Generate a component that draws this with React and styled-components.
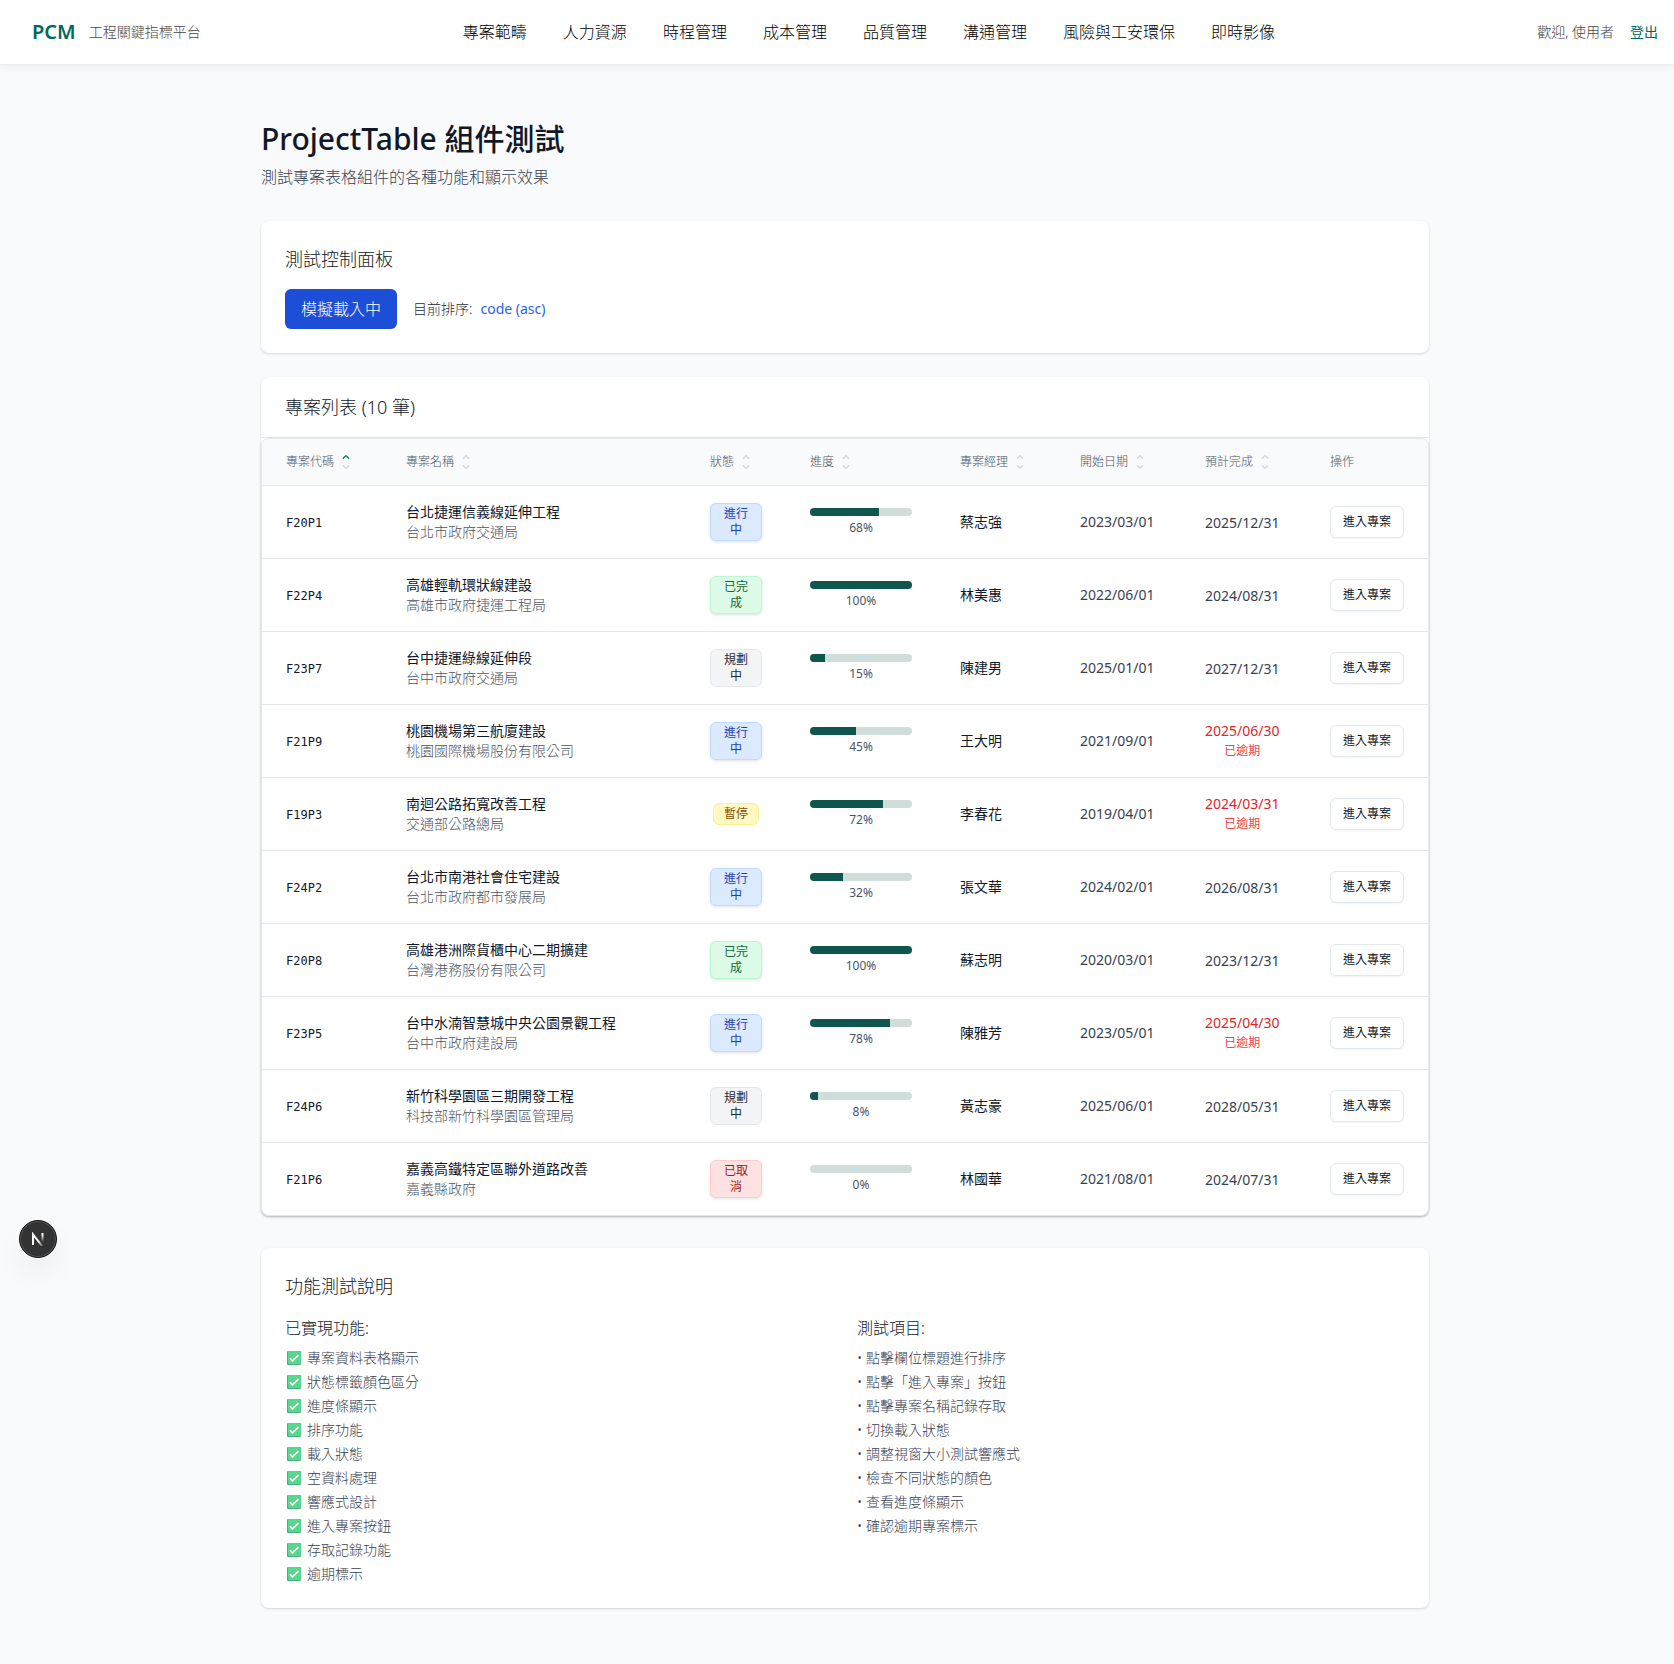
import React, { useState } from "react";
import styled, { createGlobalStyle } from "styled-components";

const GlobalStyle = createGlobalStyle`
  *, *::before, *::after { box-sizing: border-box; }
  body {
    margin: 0;
    background: #f9fafb;
    color: #111827;
    font-family: "Noto Sans", "Noto Sans CJK TC", sans-serif;
    font-size: 16px;
    font-weight: 300;
    line-height: 24px;
  }
  h1, h2, h3, p, ul { margin: 0; padding: 0; font-weight: 300; }
  ul { list-style: none; }
  button { font: inherit; cursor: pointer; }
  a { color: inherit; text-decoration: none; }
`;

const Header = styled.header`
  display: flex;
  justify-content: space-between;
  align-items: center;
  min-height: 65px;
  padding: 0 16px 0 32px;
  background: #fff;
  border-bottom: 1px solid #eceef0;
  box-shadow: 0 2px 8px rgba(0, 0, 0, 0.06);
`;

const Brand = styled.div`
  display: flex;
  align-items: center;
  gap: 13px;
`;

const Logo = styled.a`
  color: #00695c;
  font-size: 20px;
  font-weight: 600;
`;

const Muted = styled.span`
  color: #444;
  font-size: 14px;
`;

const Nav = styled.nav`
  display: flex;
  gap: 36px;
  color: #000;
`;

const Account = styled.div`
  display: flex;
  justify-content: flex-end;
  gap: 16px;
`;

const Logout = styled.a`
  color: #00695c;
  font-size: 14px;
  font-weight: 400;
`;

const Main = styled.main`
  max-width: 1184px;
  margin: 0 auto;
  padding: 56px 0 56px 16px;
`;

const PageHead = styled.div`
  margin-bottom: 32px;
`;

const PageTitle = styled.h1`
  margin-bottom: 8px;
  font-size: 30px;
  line-height: 36px;
  font-weight: 500;
`;

const PageIntro = styled.p`
  color: #374151;
`;

const Card = styled.section`
  padding: 24px;
  border-radius: 8px;
  background: #fff;
  box-shadow: 0 1px 3px rgba(0, 0, 0, 0.1), 0 1px 2px rgba(0, 0, 0, 0.06);
`;

const CardTitle = styled.h2`
  font-size: 18px;
  line-height: 28px;
`;

const Controls = styled.div`
  display: flex;
  align-items: center;
  gap: 16px;
  margin-top: 16px;
`;

const PrimaryButton = styled.button`
  padding: 8px 16px;
  border: 0;
  border-radius: 6px;
  background: #1d4ed8;
  color: #fff;
`;

const SortState = styled.p`
  display: flex;
  gap: 8px;
  color: #1f2937;
  font-size: 14px;
`;

const SortValue = styled.span`
  color: #2563eb;
  font-weight: 400;
`;

const ListCard = styled(Card)`
  margin: 24px 0 32px;
  padding: 0;
`;

const ListHead = styled.div`
  padding: 16px 24px;
  border-bottom: 1px solid #e5e7eb;
`;

const TableFrame = styled.div`
  overflow: hidden;
  border: 1px solid #e5e7eb;
  border-radius: 8px;
  background: #fff;
  box-shadow: 0 1px 3px rgba(0, 0, 0, 0.1), 0 1px 2px rgba(0, 0, 0, 0.06);
`;

const Table = styled.table`
  width: 100%;
  table-layout: fixed;
  border-collapse: separate;
  border-spacing: 0;
  font-size: 14px;
  line-height: 20px;
`;

const HeadCell = styled.th`
  height: 47px;
  padding: 0 24px;
  border-bottom: 1px solid #e5e7eb;
  background: #f9fafb;
  color: #4b5563;
  font-size: 12px;
  font-weight: 300;
  text-align: left;
`;

const SortButton = styled.button`
  display: flex;
  align-items: center;
  gap: 6px;
  padding: 0;
  border: 0;
  background: none;
  color: inherit;
  white-space: nowrap;
`;

const Cell = styled.td`
  padding: 16px 24px;
  border-bottom: 1px solid #e5e7eb;
  color: ${(p) => p.$tone || "#111827"};
  font-weight: 400;
  white-space: nowrap;

  tr:last-child > & { border-bottom: 0; }
`;

const Code = styled.span`
  font-family: "DejaVu Sans Mono", monospace;
  font-size: 12px;
`;

const ProjectName = styled.a`
  display: block;
  color: #0f172a;
`;

const Owner = styled.div`
  color: #4b5563;
  font-weight: 300;
`;

const BadgeSlot = styled.div`
  display: flex;
  justify-content: center;
`;

const badgeTones = {
  進行中: ["#dbeafe", "#bfdbfe", "#1e40af"],
  已完成: ["#dcfce7", "#bbf7d0", "#166534"],
  規劃中: ["#f3f4f6", "#e5e7eb", "#1f2937"],
  暫停: ["#fef9c3", "#fef08a", "#854d0e"],
  已取消: ["#fee2e2", "#fecaca", "#991b1b"],
};

const Badge = styled.span`
  padding: 2px 10px;
  border: 1px solid ${(p) => badgeTones[p.$status][1]};
  border-radius: 6px;
  background: ${(p) => badgeTones[p.$status][0]};
  color: ${(p) => badgeTones[p.$status][2]};
  box-shadow: ${(p) => (["暫停", "規劃中"].includes(p.$status) ? "none" : "0 1px 3px rgba(0, 0, 0, 0.12)")};
  font-size: 12px;
  line-height: 16px;
  text-align: center;
  white-space: normal;
`;

const Track = styled.div`
  overflow: hidden;
  height: 8px;
  border-radius: 4px;
  background: #cfdddb;
`;

const Fill = styled.div`
  height: 100%;
  background: #0f574e;
`;

const Percent = styled.div`
  margin-top: 4px;
  color: #4b5563;
  font-size: 12px;
  line-height: 16px;
  text-align: center;
`;

const DueDate = styled.div`
  display: inline-flex;
  flex-direction: column;
  align-items: center;
  vertical-align: middle;
  color: ${(p) => (p.$late ? "#dc2626" : "#374151")};
`;

const LateNote = styled.span`
  color: #ef4444;
  font-size: 12px;
`;

const EnterButton = styled.button`
  display: block;
  height: 32px;
  padding: 0 12px;
  border: 1px solid #e2e8f0;
  border-radius: 6px;
  background: #fff;
  color: #0f172a;
  box-shadow: 0 1px 2px rgba(0, 0, 0, 0.05);
  font-size: 12px;
  line-height: 16px;
`;

const Notes = styled.div`
  display: grid;
  grid-template-columns: 1fr 1fr;
  gap: 24px;
  margin-top: 16px;
`;

const NotesTitle = styled.h3`
  margin-bottom: 8px;
  font-size: 16px;
`;

const NotesList = styled.ul`
  display: grid;
  gap: 4px;
  color: #374151;
  font-size: 14px;
  line-height: 20px;
`;

const NotesItem = styled.li`
  display: flex;
  align-items: center;
  gap: 5px;
`;

const DevBadge = styled.button`
  position: fixed;
  left: 19px;
  bottom: 406px;
  display: grid;
  place-items: center;
  width: 38px;
  height: 38px;
  padding: 0;
  border: 1px solid #111;
  border-radius: 50%;
  background: #333;
  box-shadow: inset 0 0 0 1px #555, 0 16px 32px -8px rgba(0, 0, 0, 0.14);
`;

const navItems = ["專案範疇", "人力資源", "時程管理", "成本管理", "品質管理", "溝通管理", "風險與工安環保", "即時影像"];

const columns = [
  { label: "專案代碼", width: 120, sortable: true, active: true },
  { label: "專案名稱", sortable: true },
  { label: "狀態", width: 100, sortable: true },
  { label: "進度", width: 150, sortable: true },
  { label: "專案經理", width: 120, sortable: true },
  { label: "開始日期", width: 125, sortable: true },
  { label: "預計完成", width: 125, sortable: true },
  { label: "操作", width: 122 },
];

const projects = [
  ["F20P1", "台北捷運信義線延伸工程", "台北市政府交通局", "進行中", 68, "蔡志強", "2023/03/01", "2025/12/31"],
  ["F22P4", "高雄輕軌環狀線建設", "高雄市政府捷運工程局", "已完成", 100, "林美惠", "2022/06/01", "2024/08/31"],
  ["F23P7", "台中捷運綠線延伸段", "台中市政府交通局", "規劃中", 15, "陳建男", "2025/01/01", "2027/12/31"],
  ["F21P9", "桃園機場第三航廈建設", "桃園國際機場股份有限公司", "進行中", 45, "王大明", "2021/09/01", "2025/06/30", true],
  ["F19P3", "南迴公路拓寬改善工程", "交通部公路總局", "暫停", 72, "李春花", "2019/04/01", "2024/03/31", true],
  ["F24P2", "台北市南港社會住宅建設", "台北市政府都市發展局", "進行中", 32, "張文華", "2024/02/01", "2026/08/31"],
  ["F20P8", "高雄港洲際貨櫃中心二期擴建", "台灣港務股份有限公司", "已完成", 100, "蘇志明", "2020/03/01", "2023/12/31"],
  ["F23P5", "台中水湳智慧城中央公園景觀工程", "台中市政府建設局", "進行中", 78, "陳雅芳", "2023/05/01", "2025/04/30", true],
  ["F24P6", "新竹科學園區三期開發工程", "科技部新竹科學園區管理局", "規劃中", 8, "黃志豪", "2025/06/01", "2028/05/31"],
  ["F21P6", "嘉義高鐵特定區聯外道路改善", "嘉義縣政府", "已取消", 0, "林國華", "2021/08/01", "2024/07/31"],
];

const features = ["專案資料表格顯示", "狀態標籤顏色區分", "進度條顯示", "排序功能", "載入狀態", "空資料處理", "響應式設計", "進入專案按鈕", "存取記錄功能", "逾期標示"];

const checks = ["點擊欄位標題進行排序", "點擊「進入專案」按鈕", "點擊專案名稱記錄存取", "切換載入狀態", "調整視窗大小測試響應式", "檢查不同狀態的顏色", "查看進度條顯示", "確認逾期專案標示"];

function SortIcon({ active }) {
  return (
    <svg width="12" height="16" viewBox="0 0 12 16" fill="none" strokeWidth="1.3" strokeLinecap="round" strokeLinejoin="round" aria-hidden="true">
      <path d="M3.3 4.3 6 1.6l2.7 2.7" stroke={active ? "#00695c" : "#d1d5db"} />
      <path d="M3.3 11.7 6 14.4l2.7-2.7" stroke="#d1d5db" />
    </svg>
  );
}

function CheckIcon() {
  return (
    <svg width="17" height="16" viewBox="0 0 17 16" fill="none" aria-hidden="true">
      <rect x="2" y="1" width="14" height="14" rx="1.2" fill="#3fa672" />
      <rect x="2.8" y="1" width="13.2" height="13.2" rx="1" fill="#58d68d" />
      <path d="m4.8 8.3 2.6 2.6 6-5.8" stroke="#fff" strokeWidth="1.5" />
    </svg>
  );
}

function ProjectRow({ project }) {
  const [code, name, owner, status, progress, manager, start, due, late] = project;
  return (
    <tr>
      <Cell><Code>{code}</Code></Cell>
      <Cell>
        <ProjectName href="#">{name}</ProjectName>
        <Owner>{owner}</Owner>
      </Cell>
      <Cell>
        <BadgeSlot><Badge $status={status}>{status}</Badge></BadgeSlot>
      </Cell>
      <Cell>
        <Track><Fill style={{ width: `${progress}%` }} /></Track>
        <Percent>{progress}%</Percent>
      </Cell>
      <Cell>{manager}</Cell>
      <Cell $tone="#374151">{start}</Cell>
      <Cell>
        <DueDate $late={late}>
          {due}
          {late && <LateNote>已逾期</LateNote>}
        </DueDate>
      </Cell>
      <Cell><EnterButton type="button">進入專案</EnterButton></Cell>
    </tr>
  );
}

export default function App() {
  const [sort] = useState("code (asc)");
  return (
    <>
      <GlobalStyle />
      <Header>
        <Brand>
          <Logo href="#">PCM</Logo>
          <Muted>工程關鍵指標平台</Muted>
        </Brand>
        <Nav>
          {navItems.map((item) => <a key={item} href="#">{item}</a>)}
        </Nav>
        <Account>
          <Muted>歡迎, 使用者</Muted>
          <Logout href="#">登出</Logout>
        </Account>
      </Header>

      <Main>
        <PageHead>
          <PageTitle>ProjectTable 組件測試</PageTitle>
          <PageIntro>測試專案表格組件的各種功能和顯示效果</PageIntro>
        </PageHead>

        <Card>
          <CardTitle>測試控制面板</CardTitle>
          <Controls>
            <PrimaryButton type="button">模擬載入中</PrimaryButton>
            <SortState>目前排序: <SortValue>{sort}</SortValue></SortState>
          </Controls>
        </Card>

        <ListCard>
          <ListHead><CardTitle>專案列表 (10 筆)</CardTitle></ListHead>
          <TableFrame>
            <Table>
              <colgroup>
                {columns.map((c) => <col key={c.label} width={c.width} />)}
              </colgroup>
              <thead>
                <tr>
                  {columns.map((c) => (
                    <HeadCell key={c.label} scope="col">
                      {c.sortable ? (
                        <SortButton type="button">{c.label}<SortIcon active={c.active} /></SortButton>
                      ) : c.label}
                    </HeadCell>
                  ))}
                </tr>
              </thead>
              <tbody>
                {projects.map((p) => <ProjectRow key={p[0]} project={p} />)}
              </tbody>
            </Table>
          </TableFrame>
        </ListCard>

        <Card>
          <CardTitle>功能測試說明</CardTitle>
          <Notes>
            <div>
              <NotesTitle>已實現功能:</NotesTitle>
              <NotesList>
                {features.map((f) => <NotesItem key={f}><CheckIcon />{f}</NotesItem>)}
              </NotesList>
            </div>
            <div>
              <NotesTitle>測試項目:</NotesTitle>
              <NotesList>
                {checks.map((c) => <NotesItem key={c}>• {c}</NotesItem>)}
              </NotesList>
            </div>
          </Notes>
        </Card>
      </Main>

      <DevBadge type="button" aria-label="Next.js">
        <svg width="14" height="14" viewBox="0 0 14 14" fill="none" aria-hidden="true">
          <defs>
            <linearGradient id="stem" x1="0" y1="1" x2="0" y2="10" gradientUnits="userSpaceOnUse">
              <stop offset="0.2" stopColor="#fff" />
              <stop offset="1" stopColor="#fff" stopOpacity="0" />
            </linearGradient>
            <linearGradient id="slash" x1="8" y1="9" x2="13" y2="15" gradientUnits="userSpaceOnUse">
              <stop stopColor="#fff" />
              <stop offset="1" stopColor="#fff" stopOpacity="0" />
            </linearGradient>
          </defs>
          <path d="M2 13V2.5l9.5 12" stroke="url(#slash)" strokeWidth="2" />
          <path d="M11.5 1v9" stroke="url(#stem)" strokeWidth="2" />
        </svg>
      </DevBadge>
    </>
  );
}
